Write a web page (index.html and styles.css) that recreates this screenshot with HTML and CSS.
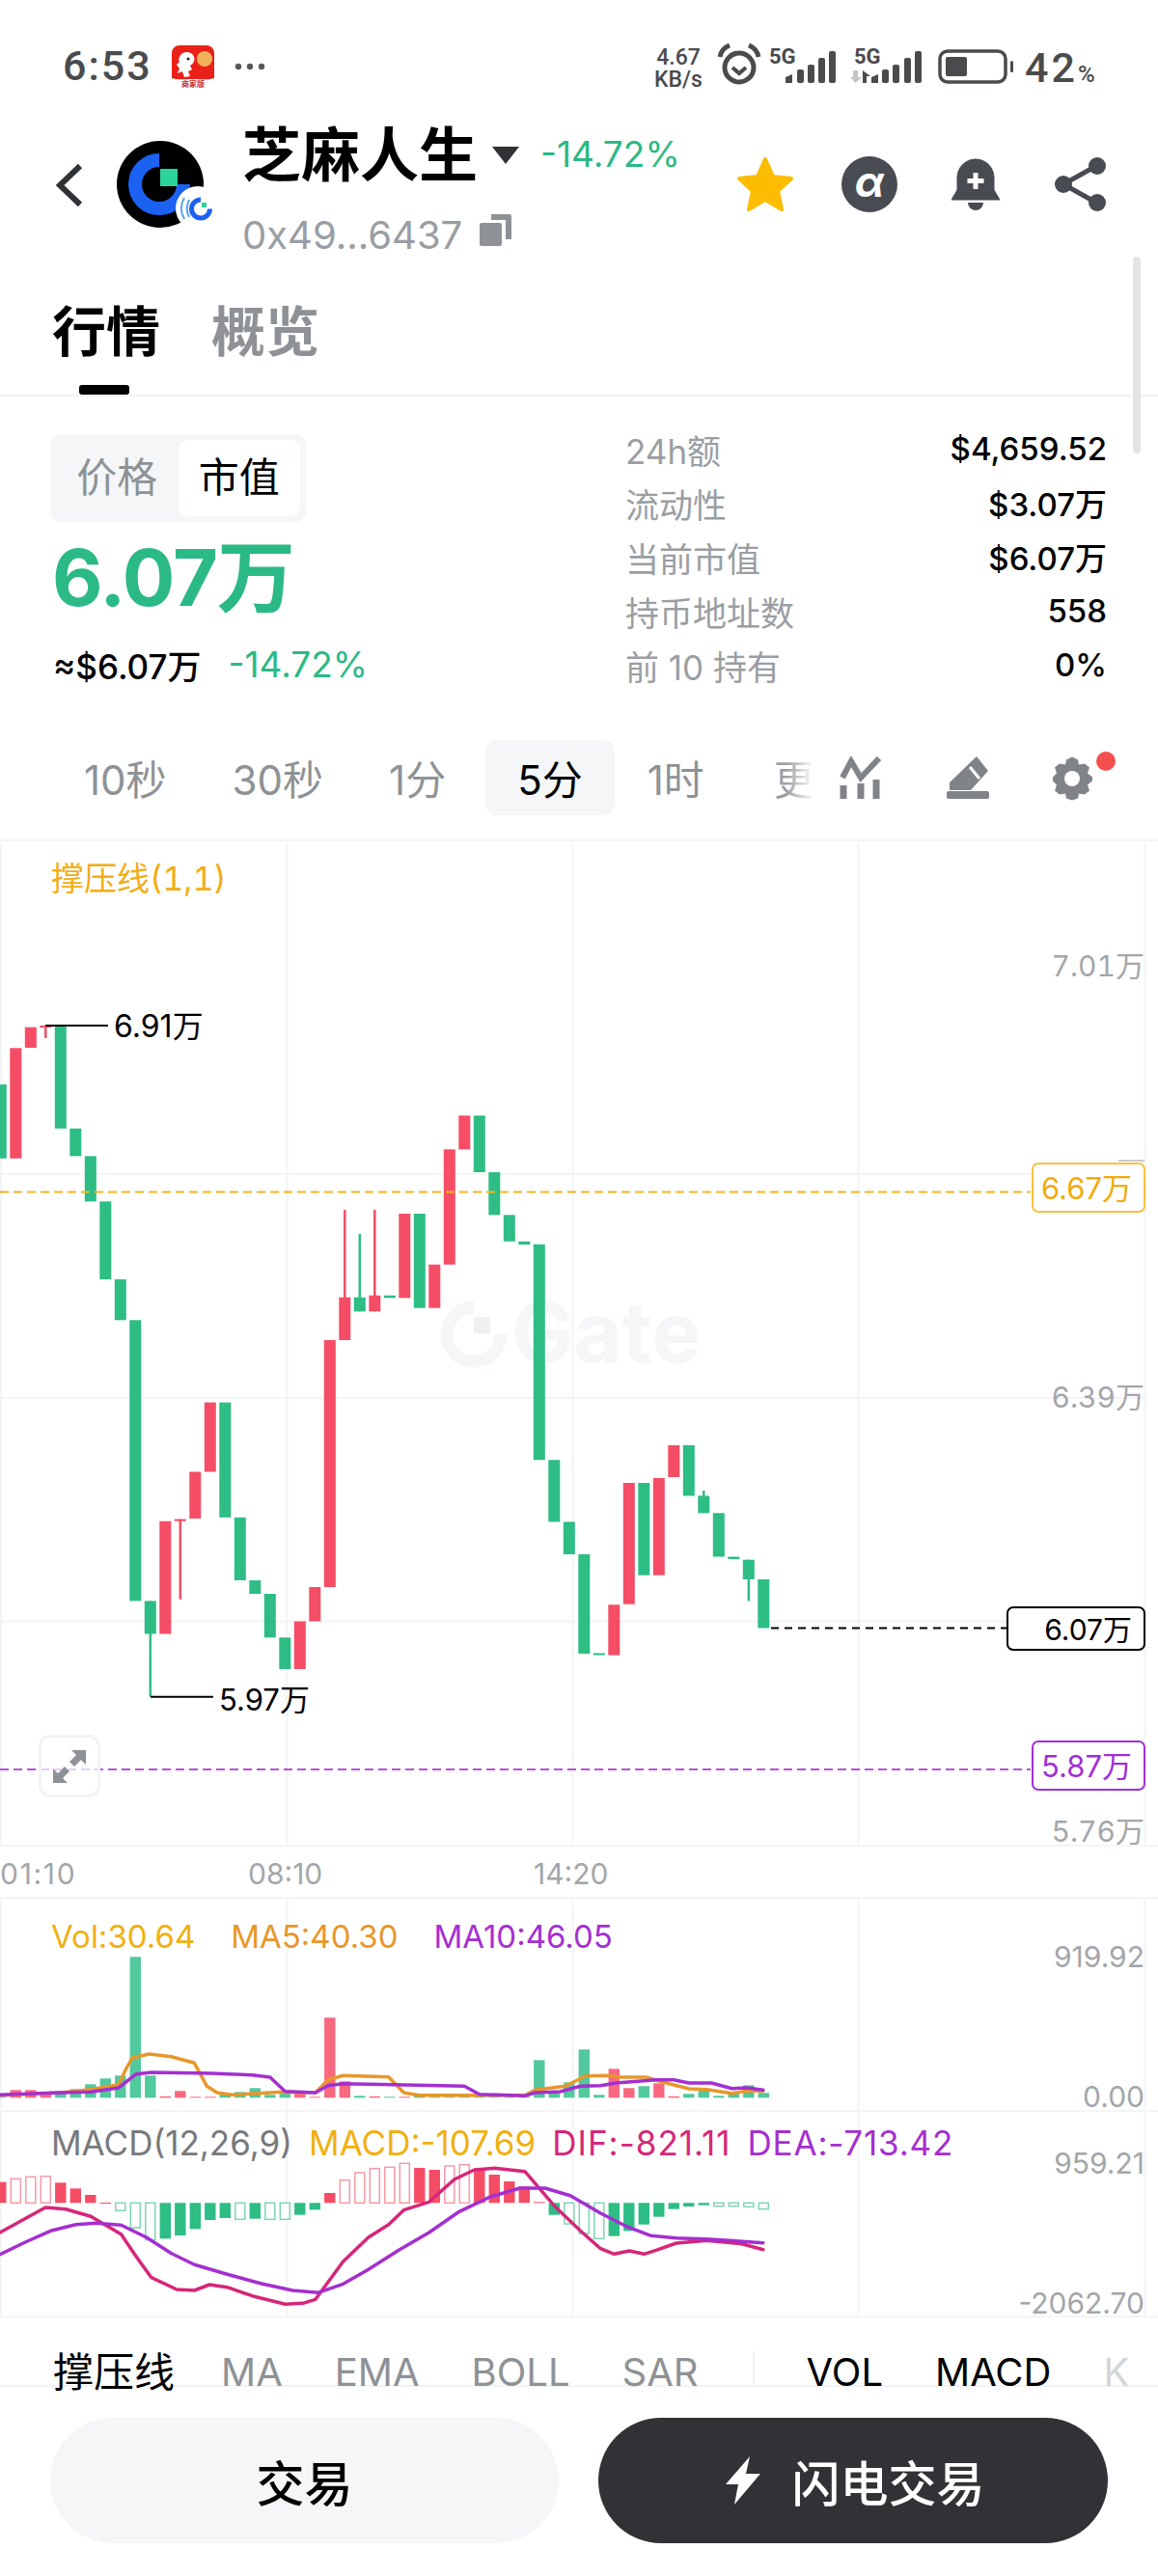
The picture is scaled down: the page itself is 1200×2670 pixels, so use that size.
FILE: index.html
```html
<!DOCTYPE html>
<html lang="en">
<head>
  <meta charset="UTF-8">
  <meta name="viewport" content="width=device-width, initial-scale=1.0">
  <title>芝麻人生</title>
  <link rel="stylesheet" href="styles.css">
</head>
<body>
  <div class="page">
    <!-- Phone status bar -->
    <div class="status">
      <span class="time">6:53</span>
      <svg class="app-icon" width="44" height="44" viewBox="0 0 44 44">
        <path d="M8 0h28a8 8 0 0 1 8 8v26c-6 2-12 1-22 1S6 36 0 34V8a8 8 0 0 1 8-8z" fill="#ea2118"/>
        <circle cx="34" cy="14" r="8" fill="#f2b25a"/>
        <path d="M8 12c2-5 10-7 14-2 3 4 1 9-3 11l2 4-4 2 2 5-6 1-2-6-5 2 2-5-3-4 3-3c-1-2-1-3 0-5z" fill="#fff"/>
        <circle cx="17" cy="14" r="1.5" fill="#222"/>
        <text x="22" y="43" class="app-text">商家版</text>
      </svg>
      <svg class="dots" width="32" height="8" viewBox="0 0 32 8">
        <circle cx="4" cy="4" r="3.2"/><circle cx="16" cy="4" r="3.2"/><circle cx="28" cy="4" r="3.2"/>
      </svg>
      <div class="status-right">
        <span class="speed">4.67<br>KB/s</span>
        <svg class="alarm" width="46" height="44" viewBox="0 0 46 44">
          <circle cx="23" cy="25" r="15" fill="none" stroke="#4a4b4d" stroke-width="5"/>
          <path d="M16 25l7 6 7-6" fill="none" stroke="#4a4b4d" stroke-width="4"/>
          <path d="M3 14C4 8 8 4 13 2M43 14C42 8 38 4 33 2" fill="none" stroke="#4a4b4d" stroke-width="5"/>
        </svg>
        <div class="net net-first">
          <span class="net-label">5G</span>
          <svg width="52" height="33" viewBox="0 0 52 33" class="bars">
            <path d="M0 33v-6l7-3v9z"/><rect x="12" y="19" width="7" height="14" rx="2"/><rect x="23" y="14" width="7" height="19" rx="2"/><rect x="34" y="7" width="7" height="26" rx="2"/><rect x="45" y="0" width="7" height="33" rx="2"/>
          </svg>
        </div>
        <div class="net net-second">
          <span class="net-label">5G</span>
          <svg width="74" height="33" viewBox="0 0 74 33" class="bars">
            <path d="M3 20h5v7h4l-6.5 6L0 27h3z" fill="#c4c5c7"/>
            <path d="M13 33V20l8 6h-4v7z"/>
            <path d="M22 33v-6l7-3v9z"/><rect x="33" y="19" width="7" height="14" rx="2"/><rect x="44" y="14" width="7" height="19" rx="2"/><rect x="56" y="7" width="7" height="26" rx="2"/><rect x="67" y="0" width="7" height="33" rx="2"/>
          </svg>
        </div>
        <svg class="battery" width="78" height="36" viewBox="0 0 78 36">
          <rect x="2" y="2" width="68" height="32" rx="8" fill="none" stroke="#4a4b4d" stroke-width="3.5"/>
          <rect x="8" y="8" width="22" height="20" rx="2" fill="#4a4b4d"/>
          <rect x="75" y="12" width="3" height="12" rx="1.5" fill="#4a4b4d"/>
        </svg>
        <span class="percent">42<small>%</small></span>
      </div>
    </div>

    <!-- Token header -->
    <div class="head">
      <svg class="back" width="28" height="46" viewBox="0 0 28 46">
        <path d="M25 3L4 23l21 20" fill="none" stroke="#2f3236" stroke-width="6"/>
      </svg>
      <svg class="logo" width="110" height="96" viewBox="0 0 110 96">
        <circle cx="45" cy="46" r="45" fill="#000"/>
        <path d="M44 21A25 25 0 1 0 69 46" fill="none" stroke="#1b61f2" stroke-width="14"/>
        <rect x="45" y="30" width="18" height="18" fill="#2dd49a"/>
        <circle cx="84" cy="71" r="23" fill="#fff"/>
        <path d="M70 60c-4 7-4 15 0 22M75 62c-3 6-3 12 0 18" fill="none" stroke="#5aa5ee" stroke-width="2"/>
        <path d="M87 62a9.5 9.5 0 1 0 9.5 9.5" fill="none" stroke="#1b61f2" stroke-width="5"/>
        <rect x="88" y="65" width="5" height="5" fill="#2dd49a"/>
      </svg>
      <div class="token">
        <div class="token-top">
          <span class="token-name">芝麻人生</span>
          <svg class="caret" width="28" height="18" viewBox="0 0 28 18"><path d="M0 0h28L14 18z" fill="#303236"/></svg>
          <span class="change">-14.72%</span>
        </div>
        <div class="token-addr">
          <span>0x49...6437</span>
          <svg class="copy" width="33" height="33" viewBox="0 0 33 33">
            <rect x="0" y="9" width="23" height="24" rx="2" fill="#8e9296"/>
            <path d="M12 0h19a2 2 0 0 1 2 2v24h-6V6H12z" fill="#8e9296"/>
          </svg>
        </div>
      </div>
      <div class="actions">
        <svg width="60" height="56" viewBox="0 0 60 56">
          <path d="M30 2l8 18 19 2-14 13 4 19-17-10-17 10 4-19L3 22l19-2z" fill="#fcbd01" stroke="#fcbd01" stroke-width="4" stroke-linejoin="round"/>
        </svg>
        <div class="alpha"><span>α</span></div>
        <svg class="bell" width="50" height="55" viewBox="0 0 50 55">
          <path d="M6 33V20a19 19 0 0 1 38 0v13l6 10H0z" fill="#484b51" stroke="#484b51" stroke-width="1" stroke-linejoin="round"/>
          <path d="M17 46h16a8 8 0 0 1-16 0z" fill="#484b51"/>
          <path d="M25 15v17M16.5 23.5h17" stroke="#fff" stroke-width="5"/>
        </svg>
        <svg class="share" width="54" height="56" viewBox="0 0 54 56">
          <path d="M43 9L9 28l34 19" fill="none" stroke="#484b51" stroke-width="5"/>
          <circle cx="9" cy="28" r="9" fill="#484b51"/><circle cx="44" cy="9" r="9" fill="#484b51"/><circle cx="44" cy="47" r="9" fill="#484b51"/>
        </svg>
      </div>
    </div>

    <!-- Main tabs -->
    <div class="tabs">
      <span class="tab tab-on">行情</span>
      <span class="tab">概览</span>
    </div>
    <div class="scrollbar"></div>

    <!-- Price and stats -->
    <div class="summary">
      <div class="summary-left">
        <div class="toggle">
          <span class="toggle-item">价格</span>
          <span class="toggle-item toggle-on">市值</span>
        </div>
        <div class="big-price">6.07万</div>
        <div class="sub-price">
          <span>≈$6.07万</span>
          <span class="change">-14.72%</span>
        </div>
      </div>
      <div class="stats">
        <div class="stat"><span>24h额</span><b>$4,659.52</b></div>
        <div class="stat"><span>流动性</span><b>$3.07万</b></div>
        <div class="stat"><span>当前市值</span><b>$6.07万</b></div>
        <div class="stat"><span>持币地址数</span><b>558</b></div>
        <div class="stat"><span>前 10 持有</span><b>0%</b></div>
      </div>
    </div>

    <!-- Interval selector -->
    <div class="intervals">
      <span class="interval">10秒</span>
      <span class="interval">30秒</span>
      <span class="interval">1分</span>
      <span class="interval interval-on">5分</span>
      <span class="interval">1时</span>
      <span class="interval interval-more">更</span>
      <div class="tools">
        <svg width="46" height="44" viewBox="0 0 46 44">
          <path d="M3 22L12 5l10 17L41 2" fill="none" stroke="#808488" stroke-width="6"/>
          <path d="M4 30v14M22 28v16M38 24v20" stroke="#808488" stroke-width="7"/>
        </svg>
        <svg width="44" height="44" viewBox="0 0 44 44">
          <path d="M31 0l12 15-18 20H3v-8z" fill="#808488"/>
          <rect x="0" y="36" width="44" height="8" rx="2" fill="#808488"/>
          <path d="M24 11l10 12" stroke="#fff" stroke-width="3"/>
        </svg>
        <div class="gear-wrap">
          <svg width="42" height="46" viewBox="0 0 42 46">
            <path d="M21 1l6 3 1 5 6-1 5 4-2 6 5 4v4l-5 4 2 6-5 4-6-1-1 5-6 2-6-2-1-5-6 1-5-4 2-6-4-4v-4l4-4-2-6 5-4 6 1 1-5z" fill="#808488" transform="translate(0 -.5)"/>
            <circle cx="21" cy="23" r="8" fill="#fff"/>
          </svg>
          <span class="red-dot"></span>
        </div>
      </div>
    </div>

    <!-- Chart canvas, filled by chart.js -->
    <div class="chart">
      <div class="watermark">Gate</div>
      <svg id="chartSvg" class="chart-svg" viewBox="0 873 1200 1530" width="1200" height="1530"></svg>

      <div class="legend legend-main">撑压线(1,1)</div>
      <span class="mark mark-high">6.91万</span>
      <span class="mark mark-low">5.97万</span>

      <span class="axis axis-wan axis-701">7.01万</span>
      <span class="axis axis-wan axis-639">6.39万</span>
      <span class="axis axis-wan axis-576">5.76万</span>
      <span class="tag-tick"></span>
      <span class="tag tag-yellow">6.67万</span>
      <span class="tag tag-black">6.07万</span>
      <span class="tag tag-purple">5.87万</span>

      <div class="expand">
        <svg width="34" height="34" viewBox="0 0 34 34">
          <path d="M34 0v15l-5-5-7 7-5-5 7-7-5-5zM0 34V19l5 5 7-7 5 5-7 7 5 5z" fill="#8e9296"/>
        </svg>
      </div>

      <span class="time-label time-0110">01:10</span>
      <span class="time-label time-0810">08:10</span>
      <span class="time-label time-1420">14:20</span>

      <div class="legend legend-vol">
        <span class="c-yellow">Vol:30.64</span>
        <span class="c-orange">MA5:40.30</span>
        <span class="c-purple">MA10:46.05</span>
      </div>
      <span class="axis axis-vol-top">919.92</span>
      <span class="axis axis-vol-bottom">0.00</span>

      <div class="legend legend-macd">
        <span class="c-gray">MACD(12,26,9)</span>
        <span class="c-yellow">MACD:-107.69</span>
        <span class="c-pink">DIF:-821.11</span>
        <span class="c-purple">DEA:-713.42</span>
      </div>
      <span class="axis axis-macd-top">959.21</span>
      <span class="axis axis-macd-bottom">-2062.70</span>
    </div>

    <!-- Indicator selector -->
    <div class="indicators">
      <span class="ind ind-on ind-first">撑压线</span>
      <span class="ind">MA</span>
      <span class="ind">EMA</span>
      <span class="ind">BOLL</span>
      <span class="ind">SAR</span>
      <span class="ind-divider"></span>
      <span class="ind ind-on">VOL</span>
      <span class="ind ind-on">MACD</span>
      <span class="ind ind-more">K</span>
    </div>

    <!-- Trade buttons -->
    <div class="buttons">
      <button class="btn btn-light">交易</button>
      <button class="btn btn-dark">
        <svg width="36" height="50" viewBox="0 0 36 50"><path d="M25 0L0 29h13L9 50l27-32H21z" fill="#fff"/></svg>
        闪电交易
      </button>
    </div>
  </div>
  <script src="chart.js"></script>
</body>
</html>
```

FILE: styles.css
```css
* {
  box-sizing: border-box;
}
body {
  margin: 0;
  background-color: #fff;
  font-family: Inter, "Noto Sans CJK SC", sans-serif;
  color: #000;
}
.page {
  width: 1200px;
  height: 2670px;
  overflow: hidden;
  position: relative;
  display: flex;
  flex-direction: column;
}
svg {
  display: block;
  flex-shrink: 0;
}

/* Status bar */
.status {
  height: 115px;
  flex-shrink: 0;
  display: flex;
  align-items: flex-start;
  padding: 46px 65px 0 65px;
  color: #4a4b4d;
}
.time {
  font-family: Roboto, sans-serif;
  font-size: 43px;
  line-height: 44px;
  font-weight: 500;
  letter-spacing: 2px;
}
.app-icon {
  margin: 1px 0 0 20px;
}
.app-text {
  font-family: "Noto Sans CJK SC", sans-serif;
  font-size: 8px;
  font-weight: 700;
  fill: #c8302a;
  text-anchor: middle;
}
.dots {
  margin: 19px 0 0 21px;
  fill: #56585b;
}
.status-right {
  margin-left: auto;
  display: flex;
  align-items: flex-start;
}
.speed {
  width: 50px;
  font-family: Roboto, sans-serif;
  font-size: 23px;
  line-height: 23px;
  font-weight: 500;
  text-align: center;
  margin-top: 2px;
  white-space: nowrap;
}
.alarm {
  margin: -1px 0 0 15px;
}
.net {
  position: relative;
  margin-top: 7px;
}
.net-first {
  margin-left: 25px;
}
.net-second {
  margin-left: 15px;
}
.net-label {
  position: absolute;
  top: -4px;
  font-family: Roboto, sans-serif;
  font-size: 22px;
  line-height: 20px;
  font-weight: 700;
}
.net-first .net-label {
  left: -17px;
}
.net-second .net-label {
  left: 4px;
}
.bars {
  fill: #4a4b4d;
}
.battery {
  margin: 5px 0 0 17px;
}
.percent {
  width: 73px;
  margin: 3px 0 0 12px;
  font-family: Roboto, sans-serif;
  font-size: 43px;
  line-height: 42px;
  font-weight: 500;
  letter-spacing: 3px;
  white-space: nowrap;
}
.percent small {
  font-size: 24px;
  letter-spacing: 0;
}

/* Token header */
.head {
  height: 165px;
  flex-shrink: 0;
  display: flex;
  align-items: flex-start;
  padding-left: 58px;
}
.back {
  margin-top: 54px;
}
.logo {
  margin: 30px 0 0 35px;
}
.token {
  margin-left: 20px;
}
.token-top {
  display: flex;
  align-items: center;
  height: 92px;
}
.token-name {
  font-size: 61px;
  line-height: 92px;
  font-weight: 700;
}
.caret {
  margin: 0 0 0 15px;
}
.change {
  color: #2bb985;
  font-size: 37px;
  font-weight: 400;
}
.token-top .change {
  margin-left: 22px;
  margin-top: -4px;
}
.token-addr {
  display: flex;
  align-items: center;
  height: 56px;
  margin-top: 8px;
  font-size: 40px;
  color: #9a9ea3;
  gap: 18px;
}
.copy {
  margin-top: -10px;
}
.actions {
  margin-left: auto;
  margin-top: 47px;
  padding-right: 53px;
  display: flex;
  align-items: center;
}
.alpha {
  width: 58px;
  height: 58px;
  margin-left: 49px;
  border-radius: 50%;
  background-color: #484b51;
  color: #fff;
  display: flex;
  align-items: center;
  justify-content: center;
  font-size: 44px;
  font-style: italic;
  font-weight: 700;
  line-height: 50px;
}
.alpha span {
  margin-top: -6px;
}
.bell {
  margin-left: 56px;
}
.share {
  margin-left: 57px;
}

/* Main tabs */
.tabs {
  height: 131px;
  flex-shrink: 0;
  display: flex;
  gap: 53px;
  padding: 29px 0 0 54px;
  border-bottom: 2px solid #f2f3f4;
}
.tab {
  position: relative;
  height: 70px;
  font-size: 56px;
  line-height: 70px;
  font-weight: 700;
  color: #8e9296;
}
.tab-on {
  color: #000;
}
.tab-on::after {
  content: "";
  position: absolute;
  left: 28px;
  top: 90px;
  width: 52px;
  height: 10px;
  border-radius: 3px;
  background-color: #000;
}
.scrollbar {
  position: absolute;
  left: 1174px;
  top: 266px;
  width: 8px;
  height: 204px;
  border-radius: 4px;
  background-color: #e4e4e4;
}

/* Price and stats */
.summary {
  height: 334px;
  flex-shrink: 0;
  display: flex;
  justify-content: space-between;
  padding: 39px 53px 0 52px;
}
.summary-left {
  display: flex;
  flex-direction: column;
  align-items: flex-start;
}
.toggle {
  width: 265px;
  height: 91px;
  padding: 6px;
  display: flex;
  justify-content: flex-end;
  border-radius: 10px;
  background-color: #f4f6f7;
}
.toggle-item {
  width: 128px;
  font-size: 42px;
  line-height: 78px;
  text-align: center;
  color: #8e9296;
}
.toggle-on {
  color: #000;
  background-color: #fff;
  border-radius: 10px;
}
.big-price {
  margin: 4px 0 0 2px;
  font-size: 81px;
  line-height: 108px;
  font-weight: 700;
  color: #2bb985;
  letter-spacing: -1px;
}
.sub-price {
  display: flex;
  align-items: center;
  gap: 28px;
  margin: 13px 0 0 3px;
  height: 44px;
  font-size: 35px;
  font-weight: 500;
}
.stats {
  width: 498px;
  margin-top: -13px;
  display: flex;
  flex-direction: column;
}
.stat {
  height: 56px;
  display: flex;
  align-items: center;
  justify-content: space-between;
  font-size: 35px;
  color: #9a9ea3;
}
.stat span {
  margin-left: -1px;
}
.stat b {
  font-size: 33px;
  font-weight: 500;
  color: #000;
}

/* Interval selector */
.intervals {
  height: 127px;
  flex-shrink: 0;
  display: flex;
  padding: 22px 0 0 53px;
  position: relative;
  border-bottom: 2px solid #f2f3f4;
}
.interval {
  height: 78px;
  padding: 0 34px;
  font-size: 42px;
  line-height: 84px;
  color: #8e9296;
}
.interval-on {
  color: #000;
  padding: 0 33px;
  margin-left: 7px;
  border-radius: 12px;
  background-color: #f4f6f7;
}
.interval-more {
  background: linear-gradient(90deg, #9a9ea3 30%, #fff 100%);
  -webkit-background-clip: text;
  background-clip: text;
  color: transparent;
  padding: 0;
  margin-left: 38px;
}
.tools {
  margin-left: auto;
  padding: 17px 68px 0 0;
  display: flex;
  gap: 65px;
}
.gear-wrap {
  position: relative;
}
.red-dot {
  position: absolute;
  left: 46px;
  top: -5px;
  width: 20px;
  height: 20px;
  border-radius: 50%;
  background-color: #f4504f;
}

.chart {
  position: relative;
  height: 1530px;
  flex-shrink: 0;
}
.chart-svg {
  position: absolute;
  left: 0;
  top: 0;
}
.watermark {
  position: absolute;
  left: 530px;
  top: 461px;
  font-size: 86px;
  line-height: 96px;
  font-weight: 700;
  color: #f4f6f7;
}
.legend {
  position: absolute;
  left: 53px;
  display: flex;
  white-space: nowrap;
  font-size: 33px;
  line-height: 44px;
}
.legend-main {
  top: 17px;
  font-size: 34px;
  font-variant-numeric: tabular-nums;
  color: #f3ae16;
}
.legend-vol {
  top: 1113px;
  gap: 37px;
}
.legend-macd {
  top: 1327px;
  gap: 17px;
  font-size: 35px;
}
.legend-macd .c-pink {
  letter-spacing: 1px;
}
.legend-macd .c-purple {
  letter-spacing: 0.8px;
}
.c-yellow {
  color: #f0b012;
}
.c-orange {
  color: #e8972b;
}
.c-purple {
  color: #a42fd0;
}
.c-pink {
  color: #d6267a;
}
.c-gray {
  color: #77797d;
}
.mark {
  position: absolute;
  font-size: 31px;
  line-height: 40px;
  color: #000;
}
.mark-high {
  left: 118px;
  top: 172px;
  font-size: 32px;
}
.mark-low {
  left: 227px;
  top: 870px;
}
.axis {
  position: absolute;
  right: 14px;
  font-size: 30px;
  line-height: 40px;
  color: #a3a6aa;
}
.axis-wan {
  font-variant-numeric: tabular-nums;
}
.axis-701 { top: 109px; }
.axis-639 { top: 556px; }
.axis-576 { top: 1006px; }
.axis-vol-top { top: 1136px; }
.axis-vol-bottom { top: 1281px; }
.axis-macd-top { top: 1350px; }
.axis-macd-bottom { top: 1495px; }
.tag {
  position: absolute;
  right: 13px;
  height: 52px;
  padding-right: 12px;
  border: 2px solid;
  border-radius: 7px;
  background-color: #fff;
  font-size: 31px;
  line-height: 50px;
  text-align: right;
  white-space: nowrap;
}
.tag-yellow {
  top: 333px;
  width: 118px;
  color: #f0ab0b;
  border-color: #f6c243;
}
.tag-black {
  top: 793px;
  width: 144px;
  height: 46px;
  line-height: 44px;
  font-size: 30px;
  color: #000;
  border-color: #000;
}
.tag-purple {
  top: 932px;
  width: 118px;
  color: #a12fd6;
  border-color: #a12fd6;
}
.tag-tick {
  position: absolute;
  left: 1159px;
  top: 330px;
  width: 27px;
  height: 2px;
  background-color: #c9cbcd;
}
.expand {
  position: absolute;
  left: 40px;
  top: 926px;
  width: 64px;
  height: 65px;
  border: 3px solid #f2f3f4;
  border-radius: 12px;
  background-color: rgba(255, 255, 255, 0.7);
  display: flex;
  align-items: center;
  justify-content: center;
}
.time-label {
  position: absolute;
  top: 1050px;
  font-size: 30px;
  line-height: 40px;
  color: #a3a6aa;
}
.time-0110 { left: 0; letter-spacing: 1.7px; }
.time-0810 { left: 257px; }
.time-1420 { left: 553px; }

/* Indicator selector */
.indicators {
  height: 72px;
  flex-shrink: 0;
  display: flex;
  align-items: flex-start;
  padding: 37px 0 0 55px;
  border-bottom: 2px solid #f2f3f4;
}
.ind {
  font-size: 40px;
  line-height: 40px;
  color: #8e9296;
  margin-right: 54px;
  white-space: nowrap;
}
.ind-on {
  color: #000;
}
.ind-first {
  font-size: 42px;
  margin-right: 48px;
}
.ind-divider {
  width: 2px;
  height: 36px;
  margin: -2px 54px 0 2px;
  background-color: #f0f1f2;
}
.ind-more {
  margin-right: 0;
  color: #d4d6d8;
}

/* Trade buttons */
.buttons {
  display: flex;
  gap: 41px;
  padding: 32px 52px 0 52px;
}
.btn {
  height: 130px;
  border: none;
  border-radius: 65px;
  font-family: "Noto Sans CJK SC", sans-serif;
  font-weight: 500;
  font-size: 50px;
  display: flex;
  align-items: center;
  justify-content: center;
}
.btn-light {
  width: 527px;
  background-color: #f4f6f7;
  color: #000;
}
.btn-dark {
  width: 528px;
  gap: 33px;
  padding-left: 10px;
  background-color: #303236;
  color: #fff;
}
```

FILE: chart.js
```js
document.addEventListener("DOMContentLoaded", function() {
  const svg = document.getElementById("chartSvg");
  const NS = "http://www.w3.org/2000/svg";
  const RED = "#f54d65";
  const GREEN = "#2dbd85";
  const PURPLE = "#a42fd0";

  // x of a candle by index, same step in all three panes
  function cx(i) {
    return 0.8 + 15.5 * i;
  }

  function add(tag, attrs) {
    const el = document.createElementNS(NS, tag);
    Object.keys(attrs).forEach(key => el.setAttribute(key, attrs[key]));
    svg.appendChild(el);
    return el;
  }

  function line(x1, y1, x2, y2, color, width, dash) {
    const attrs = { x1: x1, y1: y1, x2: x2, y2: y2, stroke: color, "stroke-width": width };
    if (dash) attrs["stroke-dasharray"] = dash;
    add("line", attrs);
  }

  // Grid
  const GRID = "#f3f4f5";
  [1, 297.5, 593.5, 889.5, 1186.5].forEach(x => {
    line(x, 876, x, 1914, GRID, 2);
    line(x, 1968, x, 2403, GRID, 2);
  });
  [1218, 1450, 1681.5].forEach(y => line(0, y, 1186, y, GRID, 2));
  [1914, 1968, 2189, 2402].forEach(y => line(0, y, 1200, y, GRID, 2));

  // Watermark logo
  add("path", { d: "M491 1356a28 28 0 1 0 28 28", fill: "none", stroke: "#f4f6f7", "stroke-width": 13 });
  add("rect", { x: 491, y: 1366, width: 17, height: 17, fill: "#eef0f2" });

  // Candles: [up?, body top, body bottom, wick top, wick bottom]
  const candles = [
    [0, 1125, 1201.7], [1, 1087.3, 1201.7], [1, 1065.7, 1087], [1, 1064, 1066, 1064, 1077],
    [0, 1064, 1170.7], [0, 1170.7, 1199.3], [0, 1199.3, 1246.3], [0, 1246.3, 1327],
    [0, 1327, 1369.3], [0, 1369.3, 1660.4], [0, 1660.4, 1694.5, 1660.4, 1759.7], [1, 1577.7, 1694.5],
    [1, 1575.6, 1577.6, 1575.6, 1658.7], [1, 1526.5, 1574.9], [1, 1454.6, 1526.5], [0, 1454.6, 1573.8],
    [0, 1573.8, 1639], [0, 1639, 1653], [0, 1653, 1698.3], [0, 1698.3, 1731],
    [1, 1681.5, 1731], [1, 1646, 1681.5], [1, 1390, 1646], [1, 1345.7, 1390, 1255, 1390],
    [0, 1345.7, 1360.3, 1280, 1360.3], [1, 1343.7, 1360.3, 1255, 1360.3], [0, 1343.7, 1346.3], [1, 1259, 1346.3],
    [0, 1259, 1356.7], [1, 1311.7, 1356.7], [1, 1192.3, 1311.7], [1, 1157.3, 1192.3],
    [0, 1157.3, 1216], [0, 1216, 1260.3], [0, 1260.3, 1287.7], [0, 1287.7, 1291],
    [0, 1290.7, 1514.2], [0, 1514.2, 1578.4], [0, 1578.4, 1612], [0, 1612, 1715],
    [0, 1714.5, 1716.5], [1, 1664.3, 1716.6], [1, 1538, 1663.7], [0, 1538, 1633.7],
    [1, 1533, 1633.7], [1, 1499, 1532], [0, 1499, 1551.4], [0, 1551.4, 1569.3, 1546, 1569.3],
    [0, 1569.3, 1614.5], [0, 1614.5, 1617], [0, 1617.7, 1638, 1617.7, 1660.5], [0, 1638, 1688.5]
  ];
  candles.forEach((c, i) => {
    const color = c[0] ? RED : GREEN;
    if (c[3] !== undefined) line(cx(i), c[3], cx(i), c[4], color, 2.5);
    add("rect", { x: cx(i) - 6, y: c[1], width: 12, height: c[2] - c[1], fill: color });
  });

  // Level lines and the two extreme marks
  line(0, 1236.5, 1068, 1236.5, "#f3b61f", 2, "9 5");
  line(0, 1835, 1068, 1835, "#b950dc", 2, "9 5");
  line(799, 1688.5, 1043, 1688.5, "#000", 2, "8 6");
  line(47, 1064, 112, 1064, "#000", 2);
  line(156, 1759.7, 221, 1759.7, "#000", 2);

  // Volume bars: [up?, height]
  const VOL_BASE = 2175.3;
  const volumes = [
    [0, 1], [1, 8], [1, 8], [1, 5], [0, 7], [0, 9], [0, 14], [0, 20], [0, 23], [0, 146],
    [0, 23], [1, 1.5], [1, 7], [1, 1], [1, 1], [0, 4], [0, 6], [0, 10], [0, 3], [0, 5],
    [1, 7], [1, 1], [1, 83], [1, 17], [0, 2], [1, 1.5], [0, 1], [1, 1], [0, 3], [0, 1],
    [0, 1], [0, 1], [0, 1], [0, 1], [0, 1], [0, 1], [0, 39], [0, 5], [0, 16], [0, 50],
    [0, 3], [1, 30], [1, 10], [0, 12], [1, 15], [1, 1.5], [0, 4], [0, 9], [0, 2], [0, 5],
    [0, 13], [0, 5]
  ];
  volumes.forEach((v, i) => {
    add("rect", {
      x: cx(i) - 5.7, y: VOL_BASE - v[1], width: 11.4, height: v[1],
      fill: v[0] ? "#f8687f" : "#52c89d"
    });
  });

  // Volume and MACD lines are listed in the sampled 1.912 : 3 grid, origin at page y 1950
  function polyline(points, color) {
    const pts = points.map(p => (p[0] / 1.912).toFixed(1) + "," + (1950 + p[1] / 3).toFixed(1)).join(" ");
    add("polyline", {
      points: pts, fill: "none", stroke: color, "stroke-width": 3.5,
      "stroke-linejoin": "round", "stroke-linecap": "round"
    });
  }
  polyline([[0, 668], [120, 660], [180, 650], [235, 635], [250, 585], [262, 552], [295, 540], [340, 548], [385, 568], [410, 640], [430, 660],
    [460, 667], [560, 658], [625, 660], [650, 620], [680, 607], [770, 611], [800, 660], [830, 668], [1040, 668], [1060, 652],
    [1120, 640], [1160, 608], [1200, 607], [1230, 612], [1280, 612], [1320, 630], [1365, 648], [1400, 650], [1450, 662], [1480, 655], [1512, 655]], "#e8972b");
  polyline([[0, 667], [120, 660], [180, 658], [235, 645], [270, 602], [300, 597], [420, 600], [500, 605], [535, 612], [565, 656], [625, 660],
    [650, 638], [680, 632], [780, 635], [920, 640], [950, 665], [1040, 670], [1060, 660], [1110, 657], [1150, 640], [1190, 638],
    [1220, 630], [1300, 620], [1335, 620], [1365, 630], [1410, 630], [1450, 647], [1480, 645], [1512, 652]], PURPLE);

  // MACD histogram: [kind, y of the bar end in the sampled grid], kind 1 = filled, 0 = hollow
  const MACD_ZERO = 2284.3;
  const macd = [
    [1, 938], [0, 928], [0, 922], [0, 920], [1, 940], [1, 958], [1, 978], [1, 1002], [0, 1027], [0, 1080],
    [0, 1118], [1, 1114], [1, 1104], [1, 1084], [1, 1056], [1, 1050], [0, 1054], [1, 1052], [0, 1054], [0, 1054],
    [1, 1040], [1, 1024], [1, 972], [0, 932], [0, 909], [0, 896], [0, 892], [0, 880], [1, 894], [1, 900],
    [0, 888], [0, 884], [1, 900], [1, 915], [1, 936], [1, 952], [1, 1000], [1, 1040], [0, 1068], [0, 1098],
    [0, 1114], [1, 1106], [1, 1090], [1, 1070], [1, 1046], [1, 1022], [1, 1014], [1, 1010], [0, 1013], [0, 1013],
    [0, 1015], [0, 1022]
  ];
  macd.forEach((m, i) => {
    const y = 1950 + m[1] / 3;
    const up = y < MACD_ZERO;
    const color = up ? RED : GREEN;
    const top = Math.min(y, MACD_ZERO);
    const h = Math.max(Math.abs(y - MACD_ZERO), 1);
    if (m[0]) {
      add("rect", { x: cx(i) - 5.7, y: top, width: 11.4, height: h, fill: color });
    } else {
      add("rect", {
        x: cx(i) - 5, y: top, width: 10, height: h, fill: "#fff",
        stroke: up ? "#f59aa6" : "#7fd5b5", "stroke-width": 1.5
      });
    }
  });
  polyline([[0, 1095], [90, 1017], [130, 1022], [180, 1045], [240, 1100], [270, 1170], [300, 1235], [350, 1272], [385, 1275], [415, 1257],
    [450, 1265], [500, 1292], [565, 1318], [600, 1315], [625, 1303], [680, 1185], [730, 1110], [770, 1070], [800, 1025], [850, 1000],
    [900, 930], [940, 900], [980, 895], [1040, 905], [1100, 1015], [1150, 1090], [1190, 1145], [1217, 1162], [1247, 1152], [1276, 1162],
    [1300, 1150], [1340, 1128], [1400, 1120], [1470, 1130], [1512, 1148]], "#d6267a");
  polyline([[0, 1163], [50, 1125], [100, 1090], [150, 1070], [190, 1066], [240, 1072], [290, 1110], [340, 1160], [385, 1195], [450, 1225],
    [520, 1255], [580, 1275], [630, 1282], [680, 1255], [730, 1210], [790, 1150], [850, 1095], [910, 1030], [970, 985], [1030, 957],
    [1080, 957], [1130, 980], [1190, 1035], [1240, 1075], [1290, 1105], [1340, 1112], [1400, 1115], [1512, 1127]], PURPLE);
});
```
